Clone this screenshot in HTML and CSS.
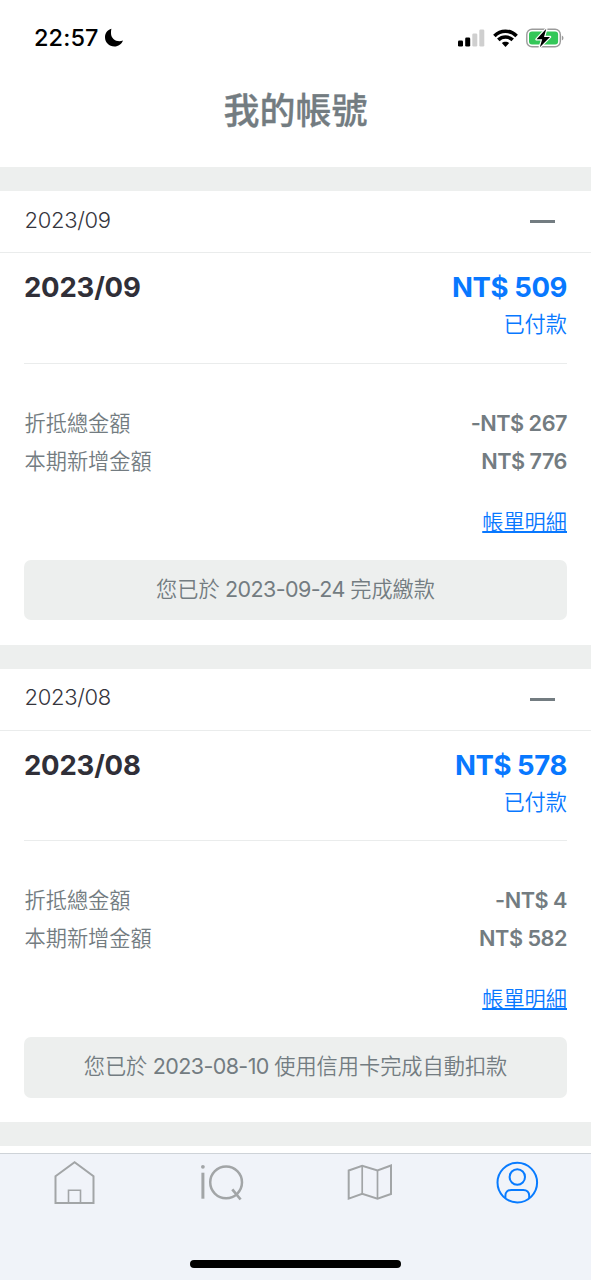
FILE: index.html
```html
<!DOCTYPE html>
<html lang="zh-Hant">
<head>
<meta charset="utf-8">
<title>我的帳號</title>
<link rel="stylesheet" href="styles.css">
</head>
<body>
<div class="screen">
  <header class="status-bar">
    <div class="clock"><span class="time">22:57</span>
      <svg class="moon" width="20" height="20" viewBox="0 0 20 20"><path d="M7.4.8C3.600 1.800 1 5.200 1 9.300c0 5.200 4.200 9.300 9.400 9.300 4 0 7.300-2.400 8.600-6-1.400.5-2.400.6-3.500.6C10.800 13.200 7 9.800 7 5.200c0-1.500 0-2.900.4-4.400z"/></svg>
    </div>
    <div class="indicators">
      <svg width="27" height="18" viewBox="0 0 27 18"><rect x="0" y="11.500" width="5" height="6" rx="1.300"/><rect x="7.200" y="8.500" width="5" height="9" rx="1.300"/><g fill="#cfcfcf"><rect x="14.300" y="4.500" width="5" height="13" rx="1.300"/><rect x="21.300" y=".5" width="5" height="17" rx="1.300"/></g></svg>
      <svg class="wifi" width="25" height="18" viewBox="0 0 25 18"><g fill="none" stroke="#000" stroke-width="3.600"><path d="M1.400 6.900C7.700.6 17.300.6 23.600 6.900"/><path d="M5.300 10.900C9.400 7 15.600 7 19.700 10.900"/></g><path d="M12.500 17.900l-3.700-3.800c2-1.800 5.400-1.800 7.400 0z"/></svg>
      <svg width="39" height="20" viewBox="0 0 39 20"><rect x=".8" y="1.200" width="33.500" height="17.600" rx="5.200" fill="#fff" stroke="#9b9b9b" stroke-width="1.400"/><rect x="3" y="3.500" width="29.100" height="13" rx="3" fill="#34c759"/><path d="M35.800 7.500c2.200.7 2.200 4.300 0 5z" fill="#9b9b9b"/><path d="M20.300.8L10.500 11.300h5.700L13.800 19.200 24 8.900h-6z" stroke="#fff" stroke-width="2.400" paint-order="stroke" stroke-linejoin="round"/></svg>
    </div>
  </header>
  <h1 class="title">我的帳號</h1>

  <main>
    <section class="bill">
      <div class="bill-header"><span class="period">2023/09</span><span class="collapse"></span></div>
      <div class="bill-body">
        <div class="summary">
          <div class="line"><span class="month">2023/09</span><span class="total">NT$ 509</span></div>
          <div class="paid">已付款</div>
        </div>
        <div class="details">
          <div class="row"><span class="label">折抵總金額</span><b class="amount">-NT$ 267</b></div>
          <div class="row"><span class="label">本期新增金額</span><b class="amount">NT$ 776</b></div>
        </div>
        <div class="more"><a class="link">帳單明細</a></div>
        <div class="notice">您已於<span class="date"> 2023-09-24 </span>完成繳款</div>
      </div>
    </section>
    <section class="bill">
      <div class="bill-header"><span class="period">2023/08</span><span class="collapse"></span></div>
      <div class="bill-body">
        <div class="summary">
          <div class="line"><span class="month">2023/08</span><span class="total">NT$ 578</span></div>
          <div class="paid">已付款</div>
        </div>
        <div class="details">
          <div class="row"><span class="label">折抵總金額</span><b class="amount">-NT$ 4</b></div>
          <div class="row"><span class="label">本期新增金額</span><b class="amount">NT$ 582</b></div>
        </div>
        <div class="more"><a class="link">帳單明細</a></div>
        <div class="notice">您已於<span class="date"> 2023-08-10 </span>使用信用卡完成自動扣款</div>
      </div>
    </section>
    <div class="divider"></div>
  </main>

  <nav class="tabs">
    <div class="tab-list">
      <svg class="tab" viewBox="0 0 48 48"><path d="M5.500 16.300 24.600 2.300 43.500 16.300V43H5.500z"/><path d="M18.500 43V30.300h12V43" stroke-width="1.600"/></svg>
      <svg class="tab" viewBox="0 0 48 48"><path d="M4.900 12.700v26" stroke-width="3"/><circle cx="4.900" cy="6.800" r="1.900" class="dot"/><circle cx="28.100" cy="22.300" r="15.900" stroke-width="2.500"/><path d="M34.300 29.300l8.300 10.200" stroke-width="2.700"/></svg>
      <svg class="tab" viewBox="0 0 48 48"><path d="M3.700 10.500 17.200 5.700 32.500 10.500 46 5.500V34L32.500 38.700 17.200 33.900 3.700 38.700z"/><path d="M17.200 6v28M32.500 10.500v28" stroke-width="1.700"/></svg>
      <svg class="tab active" viewBox="0 0 48 48"><circle cx="24.300" cy="22.600" r="19.800"/><circle cx="24.300" cy="17" r="7.700"/><path d="M12.400 38v-2.400c0-3.400 2.400-5.700 5.900-5.700h12c3.500 0 5.900 2.300 5.900 5.700V38"/></svg>
    </div>
    <div class="home-indicator"></div>
  </nav>
</div>
</body>
</html>
```
FILE: styles.css
```css
* { box-sizing: border-box; }
body {
  margin: 0;
  background: #fff;
  font-family: Inter, "Noto Sans CJK TC", sans-serif;
  color: #737c81;
}
.screen {
  width: 591px;
  height: 1280px;
  display: flex;
  flex-direction: column;
  overflow: hidden;
}
.status-bar {
  height: 76px;
  padding: 0 26px 0 34px;
  display: flex;
  align-items: center;
  justify-content: space-between;
  color: #000;
}
.clock, .indicators { display: flex; align-items: center; }
.time { font-size: 23.5px; font-weight: 500; line-height: 30px; letter-spacing: .1px; }
.moon { margin-left: 5px; }
.wifi { margin: 0 8px; }
.title {
  margin: 0;
  height: 91px;
  padding-top: 2px;
  font-size: 36px;
  line-height: 66px;
  font-weight: 500;
  text-align: center;
  -webkit-text-stroke: .3px #737c81;
}
main { flex: 1; min-height: 0; }
.bill { height: 477.5px; border-top: 24px solid #edefee; }
.bill-header {
  height: 62px;
  padding: 0 36px 4px 24.5px;
  display: flex;
  align-items: center;
  justify-content: space-between;
  border-bottom: 1px solid #eaecec;
}
.period { color: #35353d; font-size: 22px; font-weight: 300; letter-spacing: -.3px; }
.collapse { width: 25px; height: 3px; margin-top: 4px; background: #737c81; }
.bill-body { padding: 0 24px; }
.summary { height: 110.5px; padding-top: 14px; border-bottom: 1px solid #eaecec; }
.line { display: flex; justify-content: space-between; line-height: 40px; font-size: 27.5px; font-weight: 700; letter-spacing: -.2px; }
.month { color: #302f38; }
.total { letter-spacing: -.4px; }
.total, .paid, .link { color: #0878ff; }
.paid { line-height: 34px; text-align: right; font-size: 21.2px; font-weight: 350; }
.details { padding-top: 40px; }
.row { height: 38px; display: flex; justify-content: space-between; line-height: 38px; }
.label { font-size: 21.2px; font-weight: 350; padding-left: .5px; }
.amount { font-size: 21.7px; font-weight: 600; letter-spacing: -.5px; }
.more { height: 80px; padding-top: 22px; text-align: right; line-height: 40px; }
.link { font-size: 21.2px; font-weight: 350; text-decoration: underline; text-decoration-thickness: 1.5px; text-underline-offset: 1px; }
.notice {
  height: 60.5px;
  border-radius: 7px;
  background: #edefee;
  text-align: center;
  line-height: 58px;
  font-size: 21.2px;
  font-weight: 350;
}
.date { font-size: 21.5px; font-weight: 400; letter-spacing: -.6px; }
.divider { height: 24px; background: #edefee; }
.tabs { height: 127px; flex: none; border-top: 1px solid #ced3d8; background: #f0f3f9; }
.tab-list { height: 110px; padding-top: 6px; display: grid; grid-template-columns: repeat(4, 1fr); justify-items: center; }
.tab { width: 48px; height: 48px; fill: none; stroke: #a2a5a7; stroke-width: 2; }
.tab .dot { fill: #a2a5a7; stroke: none; }
.tab.active { stroke: #087bff; }
.home-indicator { width: 211px; height: 8px; margin: -4px auto 0; border-radius: 4px; background: #000; }
```
